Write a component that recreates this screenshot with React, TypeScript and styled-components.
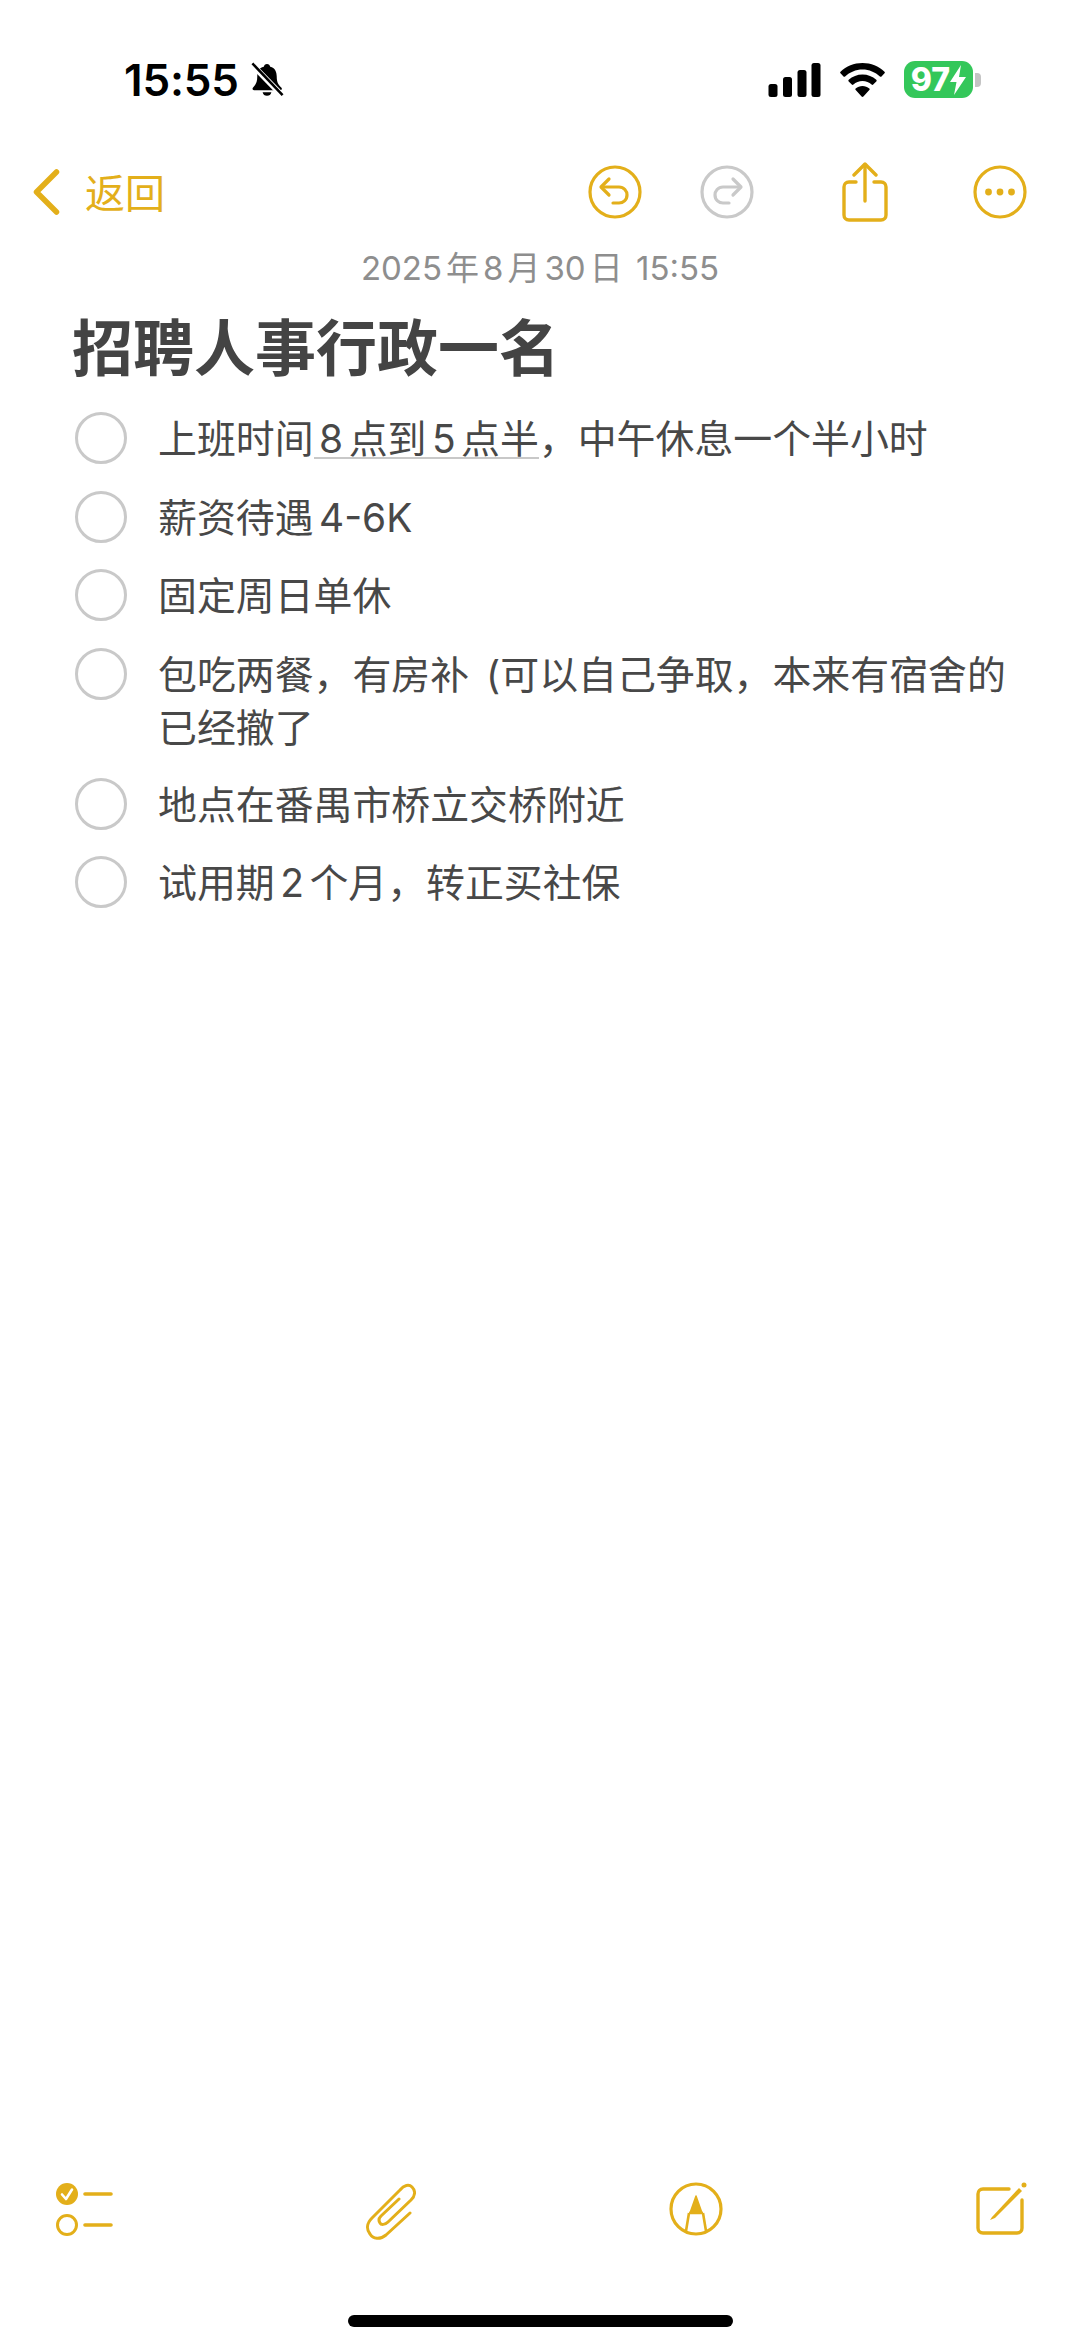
import * as React from "react";
import styled, { createGlobalStyle } from "styled-components";

const GOLD = "#e3af1a";
const CJK = `Inter, "Noto Sans CJK SC", sans-serif`;

const GlobalStyle = createGlobalStyle`
  html, body {
    margin: 0;
    padding: 0;
    background: #fff;
  }
`;

const Page = styled.div`
  width: 1080px;
  height: 2347px;
  display: flex;
  flex-direction: column;
  font-family: ${CJK};
  color: #484848;
  overflow: hidden;
`;

const StatusBar = styled.div`
  height: 104px;
  padding: 56px 99px 0 124px;
  box-sizing: border-box;
  display: flex;
  justify-content: space-between;
  align-items: flex-start;
`;

const StatusSide = styled.div<{ $gap: number }>`
  display: flex;
  align-items: center;
  gap: ${({ $gap }) => $gap}px;
  height: 48px;
`;

const Clock = styled.span`
  font-size: 44px;
  font-weight: 600;
  color: #000;
  letter-spacing: -0.2px;
`;

const NavBar = styled.div`
  height: 68px;
  margin-top: 54px;
  padding: 0 53px 0 33px;
  display: flex;
  justify-content: space-between;
  align-items: center;
`;

const BackLink = styled.div`
  display: flex;
  align-items: center;
  gap: 25px;
  color: ${GOLD};
  font-size: 40px;
`;

const BackLabel = styled.span`
  margin-bottom: 3px;
`;

const NavActions = styled.div`
  display: flex;
  align-items: center;
`;

const NavSlot = styled.div<{ $ml: number }>`
  display: flex;
  margin-left: ${({ $ml }) => $ml}px;
`;

const DateLine = styled.div`
  text-align: center;
  font-size: 33px;
  line-height: 44px;
  margin-top: 20px;
  color: #8e8e8e;
`;

const DateUnit = styled.span`
  padding: 0 4px;
`;

const Title = styled.h1`
  margin: 19px 0 0 72px;
  font-size: 61px;
  line-height: 80px;
  font-weight: 700;
  color: #444;
`;

const CheckList = styled.div`
  margin-top: 23px;
  padding: 0 50px 0 75px;
  display: flex;
  flex-direction: column;
  gap: 26.5px;
`;

const CheckRow = styled.div`
  display: flex;
  align-items: flex-start;
  gap: 31px;
  font-size: 38.9px;
  line-height: 53px;
`;

const Circle = styled.span`
  flex: none;
  width: 52px;
  height: 52px;
  box-sizing: border-box;
  border: 3.5px solid #c9c9c9;
  border-radius: 50%;
`;

const RowText = styled.span`
  margin-bottom: -2.5px;
`;

const Num = styled.span`
  padding: 0 5.5px;
`;

const Paren = styled.span`
  padding-left: 6px;
`;

const Detected = styled.span`
  background: linear-gradient(#c8c8c8, #c8c8c8) no-repeat;
  background-size: 100% 2px;
  background-position: 0 calc(100% - 3px);
`;

const Spacer = styled.div`
  flex: 1;
`;

const BottomBar = styled.div`
  padding: 0 53px 0 56px;
  display: flex;
  justify-content: space-between;
  align-items: flex-start;
`;

const HomeTrack = styled.div`
  display: flex;
  justify-content: center;
  padding: 75px 0 20px;
`;

const HomeBar = styled.div`
  width: 385px;
  height: 12px;
  border-radius: 6px;
  background: #000;
`;

const BellOff = () => (
  <svg width="34" height="37" viewBox="0 0 34 38">
    <path
      d="M17 2c-1.800 0-3 1.200-3.300 2.800C8.800 6 7 10 7 15c0 5-1 8-4.500 11.500-.8 1-.2 2.500 1.200 2.500h27c1.400 0 2-1.500 1.200-2.500C28 23 27 20 27 15c0-5-1.800-9-6.700-10.200C20 3.200 18.800 2 17 2zM12.500 31a4.600 4.600 0 0 0 9 0z"
      fill="#000"
    />
    <path d="M1 2 L33 35" stroke="#fff" strokeWidth="6" />
    <path d="M2 1.500 L33 34" stroke="#000" strokeWidth="2.600" />
  </svg>
);

const Signal = () => (
  <svg width="53" height="34" viewBox="0 0 52 34">
    <rect x="0" y="21" width="9" height="13" rx="2.500" fill="#000" />
    <rect x="14.500" y="14" width="9" height="20" rx="2.500" fill="#000" />
    <rect x="29" y="7" width="9" height="27" rx="2.500" fill="#000" />
    <rect x="43" y="0" width="9" height="34" rx="2.500" fill="#000" />
  </svg>
);

const Wifi = () => (
  <svg width="47" height="34" viewBox="0 0 46 34">
    <path
      d="M23 0C14.500 0 6.800 3.300 1 8.700c-.5.500-.5 1.200 0 1.600l3 3.100c.4.500 1.100.5 1.600 0C10.200 9.100 16.300 6.400 23 6.400s12.800 2.700 17.400 7c.5.500 1.200.5 1.600 0l3-3.100c.5-.4.500-1.100 0-1.600C39.200 3.300 31.500 0 23 0z"
      fill="#000"
    />
    <path
      d="M23 11.500c-5.300 0-10.100 2-13.800 5.300-.5.500-.5 1.200 0 1.600l3.100 3.100c.4.500 1.100.5 1.600 0 2.400-2.100 5.600-3.400 9.100-3.400s6.700 1.300 9.100 3.400c.5.500 1.200.5 1.600 0l3.100-3.100c.5-.4.500-1.100 0-1.600-3.700-3.300-8.500-5.300-13.800-5.300z"
      fill="#000"
    />
    <path d="M23 23c-2.600 0-5 1-6.800 2.500-.5.400-.5 1.100 0 1.600l5.900 6.400c.5.500 1.300.5 1.800 0l5.900-6.400c.5-.5.500-1.200 0-1.600C28 24 25.600 23 23 23z" fill="#000" />
  </svg>
);

const BatteryWrap = styled.div`
  display: flex;
  align-items: center;
  gap: 2px;
  margin-top: -1px;
`;

const BatteryBody = styled.div`
  width: 69px;
  height: 37px;
  border-radius: 11px;
  background: #34c75a;
  display: flex;
  align-items: center;
  justify-content: center;
  color: #fff;
  font-size: 32px;
  font-weight: 800;
`;

const BatteryCap = styled.div`
  width: 6px;
  height: 14px;
  border-radius: 0 4px 4px 0;
  background: #c4c4c4;
`;

const Battery = () => (
  <BatteryWrap>
    <BatteryBody>
      97
      <svg width="16" height="30" viewBox="0 0 16 30">
        <path d="M11 0 0 17h6.500L4 30 16 12H9z" fill="#fff" />
      </svg>
    </BatteryBody>
    <BatteryCap />
  </BatteryWrap>
);

const Chevron = () => (
  <svg width="27" height="46" viewBox="0 0 26 46">
    <path d="M23 3 3 23l20 20" fill="none" stroke={GOLD} strokeWidth="5.500" strokeLinecap="round" strokeLinejoin="round" />
  </svg>
);

const UndoIcon = ({ color, flip }: { color: string; flip?: boolean }) => (
  <svg width="54" height="54" viewBox="0 0 54 54">
    <circle cx="27" cy="27" r="25" fill="none" stroke={color} strokeWidth="3.200" />
    <g transform={flip ? "matrix(-1 0 0 1 54 0)" : undefined} fill="none" stroke={color} strokeWidth="3.200" strokeLinecap="round" strokeLinejoin="round">
      <path d="M21 14 L13 22 L21 30" />
      <path d="M14 22 H31 C36 22 39 26 39 30 C39 35 35 38 31 38 H25" />
    </g>
  </svg>
);

const ShareIcon = () => (
  <svg width="46" height="60" viewBox="0 0 46 60" fill="none" stroke={GOLD} strokeWidth="3.400" strokeLinecap="round" strokeLinejoin="round">
    <path d="M14 20H7c-3 0-5 2-5 5v28c0 3 2 5 5 5h32c3 0 5-2 5-5V25c0-3-2-5-5-5h-7" />
    <path d="M23 39V3" />
    <path d="M12 13 23 2l11 11" />
  </svg>
);

const MoreIcon = () => (
  <svg width="54" height="54" viewBox="0 0 54 54">
    <circle cx="27" cy="27" r="25" fill="none" stroke={GOLD} strokeWidth="3.200" />
    <circle cx="15.500" cy="27" r="3.400" fill={GOLD} />
    <circle cx="27" cy="27" r="3.400" fill={GOLD} />
    <circle cx="38.500" cy="27" r="3.400" fill={GOLD} />
  </svg>
);

const ChecklistIcon = () => (
  <svg width="58" height="56" viewBox="0 0 58 56">
    <circle cx="11" cy="12" r="11" fill={GOLD} />
    <path d="M6 12.500 10 17 16 7.500" fill="none" stroke="#fff" strokeWidth="2.600" strokeLinecap="round" strokeLinejoin="round" />
    <circle cx="11" cy="43" r="9.500" fill="none" stroke={GOLD} strokeWidth="3" />
    <path d="M29 12h26M29 43h26" stroke={GOLD} strokeWidth="3.600" strokeLinecap="round" />
  </svg>
);

const ClipIcon = () => (
  <svg width="50" height="58" viewBox="0 0 50 58" fill="none" stroke={GOLD} strokeWidth="3" strokeLinecap="round" strokeLinejoin="round">
    <path d="M44 31 20 53C14 58 7 57 4 52 0 47 1 41 6 36L34 8C38 3 43 2 46 5 50 9 49 14 45 18L22 40C19 43 15 43 14 41 12 38 13 36 15 34L33 17" />
  </svg>
);

const MarkerIcon = () => (
  <svg width="54" height="54" viewBox="0 0 54 54">
    <circle cx="27" cy="27" r="25" fill="none" stroke={GOLD} strokeWidth="3.200" />
    <path d="M27 14 33 31H21z" fill={GOLD} stroke={GOLD} strokeWidth="1.500" strokeLinejoin="round" />
    <path d="M20 31 17 49M34 31l3 18M20 31h14" fill="none" stroke={GOLD} strokeWidth="2.600" />
  </svg>
);

const ComposeIcon = () => (
  <svg width="52" height="54" viewBox="0 0 52 54">
    <path d="M34 7H8c-3 0-5 2-5 5v34c0 3 2 5 5 5h34c3 0 5-2 5-5V18" fill="none" stroke={GOLD} strokeWidth="3.400" strokeLinecap="round" />
    <path d="M17 35 44 6l3 3-27 27-5 2z" fill={GOLD} />
    <circle cx="49" cy="3" r="2.500" fill={GOLD} />
  </svg>
);

const App: React.FC = () => {
  return (
    <Page>
      <GlobalStyle />
      <StatusBar>
        <StatusSide $gap={11}>
          <Clock>15:55</Clock>
          <BellOff />
        </StatusSide>
        <StatusSide $gap={18}>
          <Signal />
          <Wifi />
          <Battery />
        </StatusSide>
      </StatusBar>

      <NavBar>
        <BackLink>
          <Chevron />
          <BackLabel>返回</BackLabel>
        </BackLink>
        <NavActions>
          <UndoIcon color={GOLD} />
          <NavSlot $ml={58}>
            <UndoIcon color="#c9c9c9" flip />
          </NavSlot>
          <NavSlot $ml={88}>
            <ShareIcon />
          </NavSlot>
          <NavSlot $ml={85}>
            <MoreIcon />
          </NavSlot>
        </NavActions>
      </NavBar>

      <DateLine>
        2025<DateUnit>年</DateUnit>8<DateUnit>月</DateUnit>30<DateUnit>日</DateUnit> 15:55
      </DateLine>
      <Title>招聘人事行政一名</Title>

      <CheckList>
        <CheckRow>
          <Circle />
          <RowText>
            上班时间
            <Detected>
              <Num>8</Num>点到<Num>5</Num>点半
            </Detected>
            ，中午休息一个半小时
          </RowText>
        </CheckRow>
        <CheckRow>
          <Circle />
          <RowText>
            薪资待遇<Num>4-6K</Num>
          </RowText>
        </CheckRow>
        <CheckRow>
          <Circle />
          <RowText>固定周日单休</RowText>
        </CheckRow>
        <CheckRow>
          <Circle />
          <RowText>
            包吃两餐，有房补<Paren> (</Paren>可以自己争取，本来有宿舍的已经撤了
          </RowText>
        </CheckRow>
        <CheckRow>
          <Circle />
          <RowText>地点在番禺市桥立交桥附近</RowText>
        </CheckRow>
        <CheckRow>
          <Circle />
          <RowText>
            试用期<Num>2</Num>个月，转正买社保
          </RowText>
        </CheckRow>
      </CheckList>

      <Spacer />

      <BottomBar>
        <ChecklistIcon />
        <ClipIcon />
        <MarkerIcon />
        <ComposeIcon />
      </BottomBar>
      <HomeTrack>
        <HomeBar />
      </HomeTrack>
    </Page>
  );
};

export default App;
